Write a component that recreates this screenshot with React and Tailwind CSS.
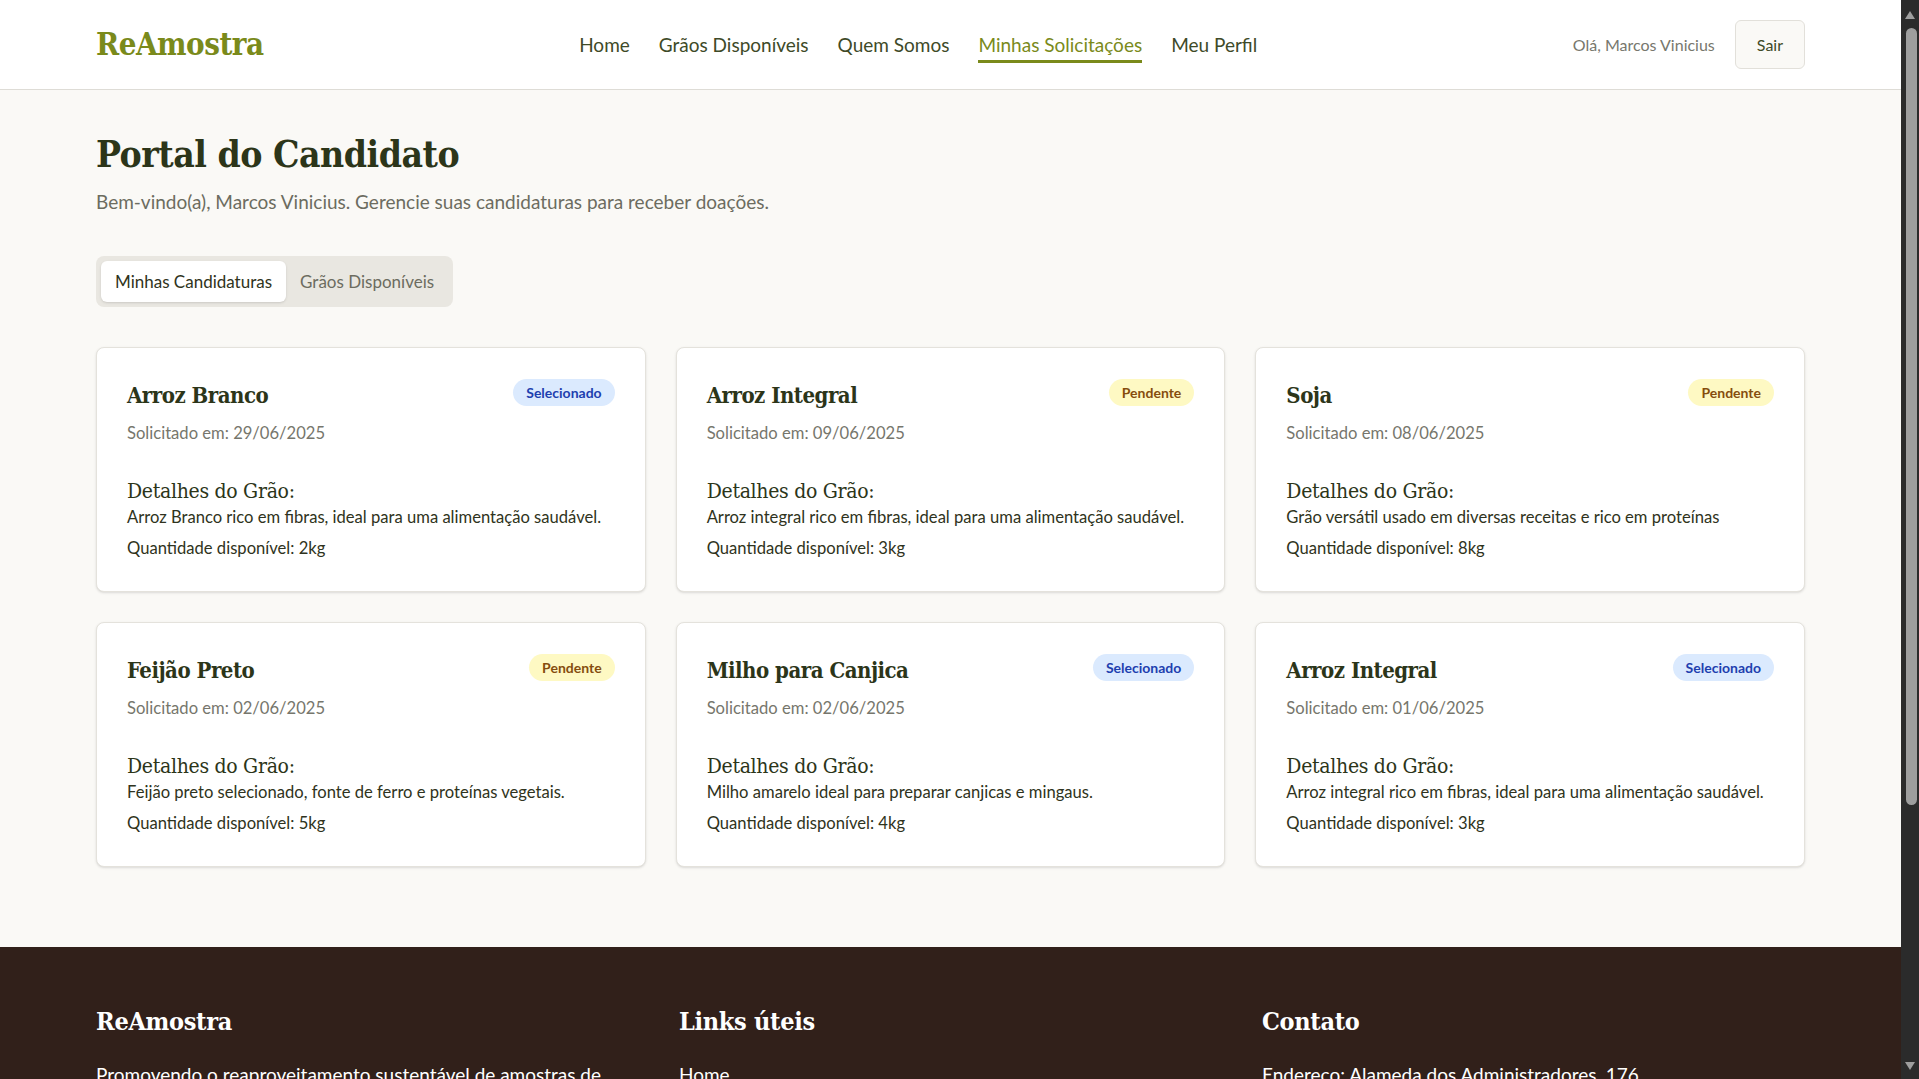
import { useState } from "react";

const serif = "font-['DejaVu_Serif_Condensed','DejaVu_Serif',serif]";

const solicitacoes = [
  { id: 1, nome: "Arroz Branco", status: "Selecionado", data: "29/06/2025", descricao: "Arroz Branco rico em fibras, ideal para uma alimentação saudável.", qtd: "2kg" },
  { id: 2, nome: "Arroz Integral", status: "Pendente", data: "09/06/2025", descricao: "Arroz integral rico em fibras, ideal para uma alimentação saudável.", qtd: "3kg" },
  { id: 3, nome: "Soja", status: "Pendente", data: "08/06/2025", descricao: "Grão versátil usado em diversas receitas e rico em proteínas", qtd: "8kg" },
  { id: 4, nome: "Feijão Preto", status: "Pendente", data: "02/06/2025", descricao: "Feijão preto selecionado, fonte de ferro e proteínas vegetais.", qtd: "5kg" },
  { id: 5, nome: "Milho para Canjica", status: "Selecionado", data: "02/06/2025", descricao: "Milho amarelo ideal para preparar canjicas e mingaus.", qtd: "4kg" },
  { id: 6, nome: "Arroz Integral", status: "Selecionado", data: "01/06/2025", descricao: "Arroz integral rico em fibras, ideal para uma alimentação saudável.", qtd: "3kg" },
];

function StatusBadge({ status }) {
  const cls =
    status === "Selecionado"
      ? "bg-[#dbeafe] text-[#1e40af]"
      : "bg-[#fef9c3] text-[#854d0e]";
  return (
    <span className={`${cls} rounded-full px-[13px] h-[27px] flex items-center text-[14px] font-bold`}>
      {status}
    </span>
  );
}

function SolicitacaoCard({ item }) {
  return (
    <div className="bg-white border border-[#e4e2dc] rounded-lg shadow-sm px-[30px] pt-[31px] pb-[30px]">
      <div className="flex items-start justify-between">
        <h3 className={`${serif} text-[22px] leading-[33px] font-bold text-[#2c3519] tracking-[-0.5px]`}>{item.nome}</h3>
        <StatusBadge status={item.status} />
      </div>
      <p className="text-[16.6px] leading-[25px] text-[#76766c] mt-[9px]">Solicitado em: {item.data}</p>
      <h4 className={`${serif} text-[21px] leading-[28px] text-[#2c3519] mt-[31px] tracking-[-0.3px]`}>Detalhes do Grão:</h4>
      <p className="text-[16.6px] leading-[25px] text-[#2f3320] whitespace-nowrap">{item.descricao}</p>
      <p className="text-[16.6px] leading-[25px] text-[#2f3320] mt-[6px]">Quantidade disponível: {item.qtd}</p>
    </div>
  );
}

function FakeScrollbar() {
  return (
    <div className="w-[18px] shrink-0 bg-[#2b2b2b] flex flex-col items-center">
      <svg width="10" height="8" viewBox="0 0 10 8" className="mt-[11px]">
        <path d="M5 0 L10 8 L0 8 Z" fill="#9e9e9e" />
      </svg>
      <div className="w-[11px] h-[777px] mt-[9px] ml-[3px] rounded-full bg-[#9e9e9e]" />
      <div className="flex-1" />
      <svg width="10" height="8" viewBox="0 0 10 8" className="mb-[9px]">
        <path d="M0 0 L10 0 L5 8 Z" fill="#9e9e9e" />
      </svg>
    </div>
  );
}

export default function App() {
  const [tab, setTab] = useState("candidaturas");

  return (
    <div className="flex h-screen overflow-hidden">
      <div className="flex-1 min-w-0 overflow-hidden bg-[#faf9f6] font-['Lato',sans-serif] text-[#2f3320]">
        {/* Header */}
        <header className="bg-white border-b border-[#dedcd6] h-[90px] px-24 flex items-center justify-between">
          <span className={`${serif} text-[31px] font-bold text-[#7a8a1b] tracking-[-0.5px]`}>ReAmostra</span>
          <nav className="flex items-center gap-[29px] text-[19px] text-[#3e4a28] pt-[2px]">
            <a href="#">Home</a>
            <a href="#">Grãos Disponíveis</a>
            <a href="#">Quem Somos</a>
            <a href="#" className="text-[#7a8a1b] border-b-[3px] border-[#7a8a1b] pt-[3px]">Minhas Solicitações</a>
            <a href="#">Meu Perfil</a>
          </nav>
          <div className="flex items-center gap-5">
            <span className="text-[16px] text-[#77776d]">Olá, Marcos Vinicius</span>
            <button className="h-[49px] px-[21px] rounded-md border border-[#e2e0da] bg-[#faf9f6] text-[16px] text-[#3e4a28]">
              Sair
            </button>
          </div>
        </header>

        {/* Main */}
        <main className="px-24 pt-[37px] pb-20">
          <h1 className={`${serif} text-[37px] font-bold text-[#2c3519] tracking-[-0.5px]`}>Portal do Candidato</h1>
          <p className="text-[19px] text-[#6c6c60] mt-[5px]">
            Bem-vindo(a), Marcos Vinicius. Gerencie suas candidaturas para receber doações.
          </p>

          <div className="inline-flex mt-[40px] bg-[#e9e7e1] rounded-lg p-[5px]">
            <button
              onClick={() => setTab("candidaturas")}
              className={`h-[41px] px-[14px] rounded-md text-[17px] ${tab === "candidaturas" ? "bg-white text-[#2f3320] shadow-sm" : "text-[#6c6c60]"}`}
            >
              Minhas Candidaturas
            </button>
            <button
              onClick={() => setTab("graos")}
              className={`h-[41px] px-[14px] rounded-md text-[17px] ${tab === "graos" ? "bg-white text-[#2f3320] shadow-sm" : "text-[#6c6c60]"}`}
            >
              Grãos Disponíveis
            </button>
          </div>

          <div className="grid grid-cols-3 gap-[30px] mt-[40px]">
            {solicitacoes.map((item) => (
              <SolicitacaoCard key={item.id} item={item} />
            ))}
          </div>
        </main>

        {/* Footer */}
        <footer className="bg-[#31201a] text-white px-24 pt-[56px] pb-16">
          <div className="grid grid-cols-3 gap-10">
            <div>
              <h3 className={`${serif} text-[25px] font-bold tracking-[-0.3px]`}>ReAmostra</h3>
              <p className="text-[19px] mt-[20px] leading-7">
                Promovendo o reaproveitamento sustentável de amostras de grãos para famílias e instituições que precisam.
              </p>
            </div>
            <div>
              <h3 className={`${serif} text-[25px] font-bold tracking-[-0.3px]`}>Links úteis</h3>
              <ul className="mt-[20px] space-y-2 text-[19px] leading-7">
                <li>Home</li>
                <li>Grãos Disponíveis</li>
                <li>Quem Somos</li>
                <li>Meu Perfil</li>
              </ul>
            </div>
            <div>
              <h3 className={`${serif} text-[25px] font-bold tracking-[-0.3px]`}>Contato</h3>
              <ul className="mt-[20px] space-y-2 text-[19px] leading-7">
                <li>Endereço: Alameda dos Administradores, 176</li>
                <li>Telefone: (19) 3429-4400</li>
                <li>E-mail: contato@reamostra.com.br</li>
              </ul>
            </div>
          </div>
        </footer>
      </div>
      <FakeScrollbar />
    </div>
  );
}
